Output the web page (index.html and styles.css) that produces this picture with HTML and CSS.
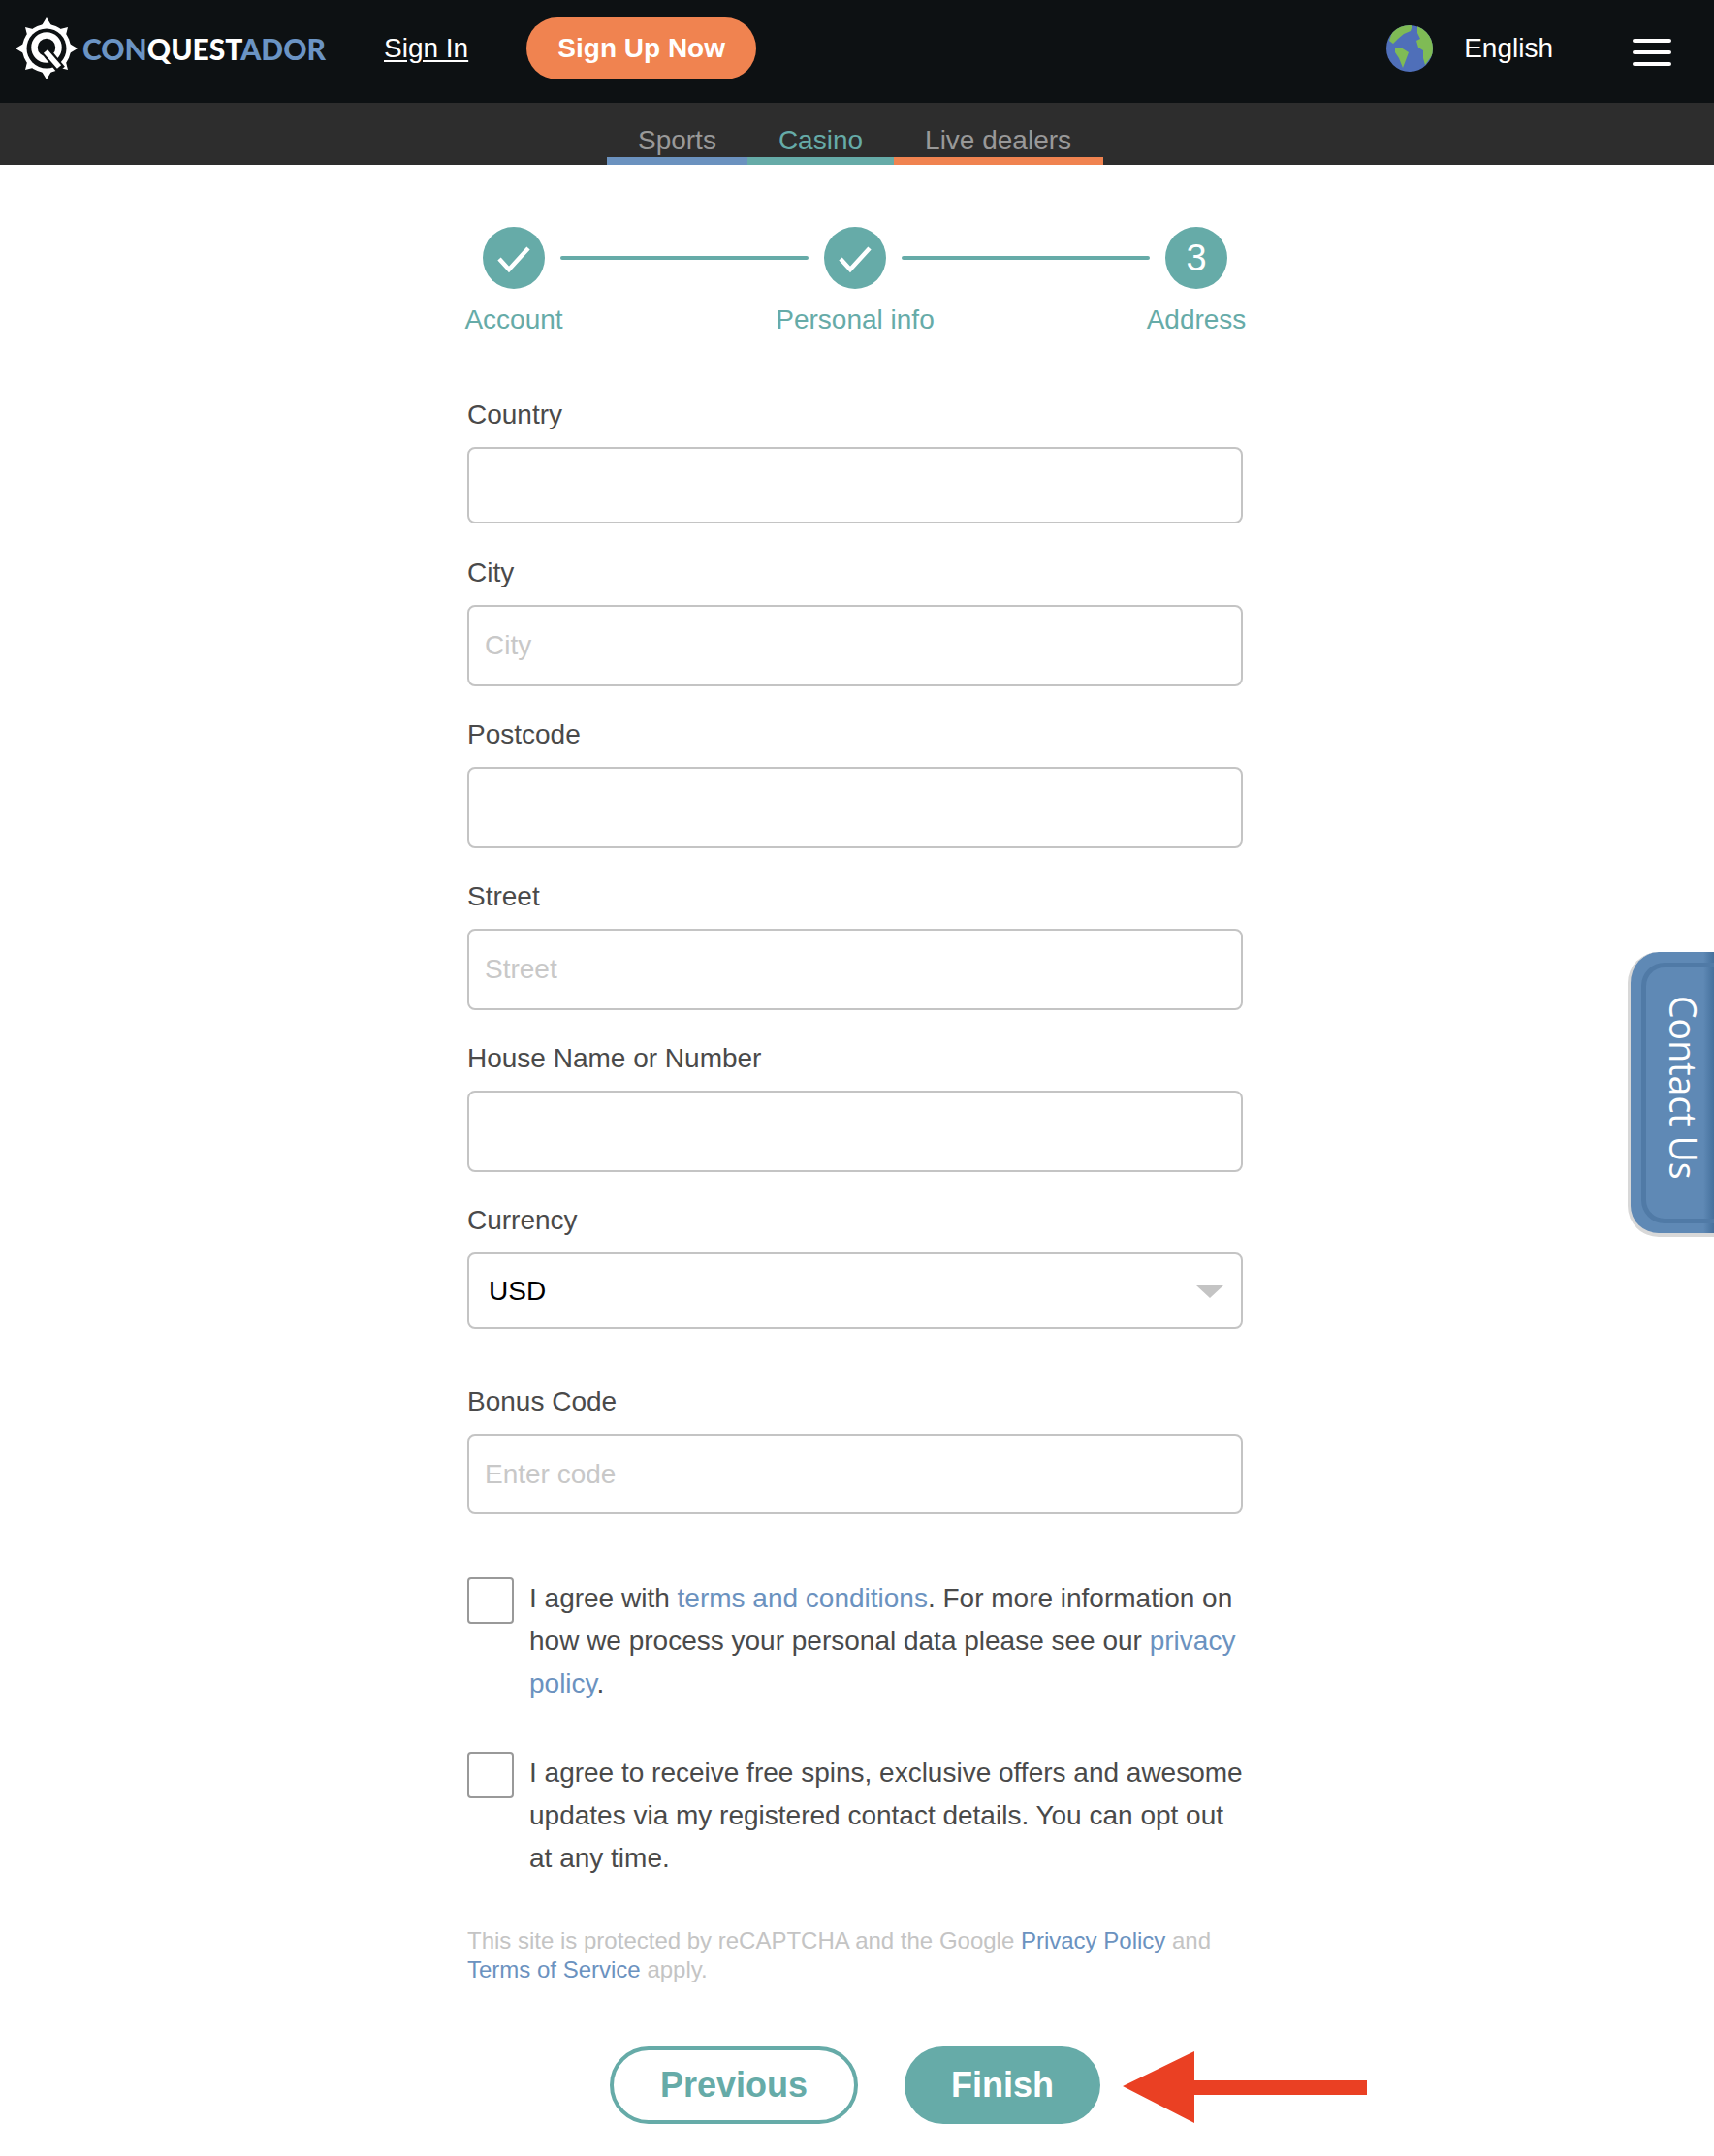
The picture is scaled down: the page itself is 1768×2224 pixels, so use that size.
FILE: index.html
```html
<!DOCTYPE html>
<html lang="en">
<head>
<meta charset="utf-8">
<title>Conquestador - Sign up</title>
<link rel="stylesheet" href="styles.css">
</head>
<body>
<header class="topbar">
  <a class="logo" href="#">
    <svg class="logo-mark" viewBox="0 0 64 64" width="64" height="64">
      <circle cx="32" cy="32" r="25" fill="#fff"/>
      <path fill="#fff" d="M32 0l6 10H26zM32 64l-6-10h12zM0 32l10-6v12zM64 32l-10 6V26zM10 10l12 3-9 9zM54 10l-3 12-9-9zM10 54l3-12 9 9zM54 54l-12-3 9-9z"/>
      <circle cx="32" cy="32" r="20.500" fill="#0d1113"/>
      <circle cx="32" cy="31" r="12.500" fill="none" stroke="#fff" stroke-width="6.500"/>
      <path d="M33 37l14 17" stroke="#0d1113" stroke-width="10" fill="none"/>
      <path d="M31 35l14 16" stroke="#fff" stroke-width="5.500" fill="none"/>
    </svg>
    <span class="logo-text"><span class="logo-blue">CON</span>QUEST<span class="logo-blue">ADOR</span></span>
  </a>
  <a class="signin" href="#">Sign In</a>
  <a class="signup" href="#">Sign Up Now</a>
  <div class="spacer"></div>
  <svg class="globe" viewBox="0 0 48 48" width="48" height="48">
    <defs><clipPath id="globe-clip"><circle cx="24" cy="24" r="24"/></clipPath></defs>
    <circle cx="24" cy="24" r="24" fill="#4f6fb9"/>
    <g clip-path="url(#globe-clip)" fill="#7fbb55">
      <path d="M12 0h15l-2 6-7 3-6 5-5 5-4-3 3-9z"/>
      <path d="M9 24l6-1 8 5-3 8-3 8-4-10-4-6z"/>
      <path d="M32 0h16v30l-8 11-2-7v-8l-5-3-2-7 4-2-3-6z"/>
    </g>
  </svg>
  <span class="lang">English</span>
  <button class="burger" type="button" aria-label="Menu"><span></span><span></span><span></span></button>
</header>

<nav class="subnav">
  <a class="tab tab-sports" href="#">Sports</a>
  <a class="tab tab-casino" href="#">Casino</a>
  <a class="tab tab-live" href="#">Live dealers</a>
</nav>

<main class="content">
  <form class="form">
    <div class="stepper">
      <div class="steps">
        <span class="circle"><svg viewBox="0 0 64 64" width="64" height="64"><path d="M17 33l10 11 20-22" fill="none" stroke="#fff" stroke-width="4.500"/></svg></span>
        <span class="step-line"></span>
        <span class="circle"><svg viewBox="0 0 64 64" width="64" height="64"><path d="M17 33l10 11 20-22" fill="none" stroke="#fff" stroke-width="4.500"/></svg></span>
        <span class="step-line"></span>
        <span class="circle">3</span>
      </div>
      <div class="step-labels">
        <span class="step-label">Account</span>
        <span class="step-label">Personal info</span>
        <span class="step-label">Address</span>
      </div>
    </div>

    <div class="field field-first">
      <label class="label">Country</label>
      <input class="input input-short" type="text">
    </div>
    <div class="field">
      <label class="label">City</label>
      <input class="input" type="text" placeholder="City">
    </div>
    <div class="field">
      <label class="label">Postcode</label>
      <input class="input" type="text">
    </div>
    <div class="field">
      <label class="label">Street</label>
      <input class="input" type="text" placeholder="Street">
    </div>
    <div class="field">
      <label class="label">House Name or Number</label>
      <input class="input" type="text">
    </div>
    <div class="field field-select">
      <label class="label">Currency</label>
      <div class="select-wrap">
        <select class="select"><option>USD</option></select>
      </div>
    </div>
    <div class="field">
      <label class="label">Bonus Code</label>
      <input class="input input-bonus" type="text" placeholder="Enter code">
    </div>

    <div class="check-row check-first">
      <span class="check"></span>
      <p class="check-text">I agree with <a href="#">terms and conditions</a>. For more information on how we process your personal data please see our <a href="#">privacy policy</a>.</p>
    </div>
    <div class="check-row">
      <span class="check"></span>
      <p class="check-text">I agree to receive free spins, exclusive offers and awesome updates via my registered contact details. You can opt out at any time.</p>
    </div>

    <p class="recaptcha">This site is protected by reCAPTCHA and the Google <a href="#">Privacy Policy</a> and <a href="#">Terms of Service</a> apply.</p>

    <div class="actions">
      <button class="btn btn-outline" type="button">Previous</button>
      <button class="btn btn-solid" type="button">Finish</button>
      <svg class="arrow" viewBox="0 0 252 74" width="252" height="74"><path fill="#ea4023" d="M0 36L74 0v30h178v15H74v29z"/></svg>
    </div>
  </form>
</main>

<a class="contact" href="#"><span class="contact-inner"><span class="contact-text">Contact Us</span></span></a>
</body>
</html>
```

FILE: styles.css
```css
* { box-sizing: border-box; }

html, body {
  margin: 0;
  padding: 0;
}

body {
  position: relative;
  height: 2224px;
  overflow: hidden;
  background: #fff;
  color: #4a4a4a;
  font-family: "Liberation Sans", Arial, sans-serif;
  font-size: 28px;
}

a { color: #6b92bf; text-decoration: none; }

/* top bar */
.topbar {
  display: flex;
  align-items: center;
  height: 106px;
  padding-bottom: 6px;
  padding-left: 16px;
  background: #0d1113;
}

.logo {
  display: flex;
  align-items: center;
  width: 380px;
  gap: 5px;
}

.logo-mark { flex: none; }

.logo-text {
  font-family: Lato, sans-serif;
  font-weight: 900;
  font-size: 30px;
  color: #fff;
}

.logo-blue { color: #6b94c4; }

.signin {
  color: #fff;
  text-decoration: underline;
  text-underline-offset: 3px;
}

.signup {
  display: flex;
  align-items: center;
  justify-content: center;
  width: 237px;
  height: 64px;
  margin-left: 60px;
  border-radius: 32px;
  background: #f08350;
  color: #fff;
  font-weight: 700;
}

.spacer { flex: 1; }

.globe { flex: none; }

.lang {
  margin-left: 32px;
  color: #fff;
}

.burger {
  display: flex;
  flex-direction: column;
  gap: 8px;
  width: 40px;
  margin: 8px 44px 0 82px;
  padding: 0;
  border: 0;
  background: none;
}

.burger span {
  display: block;
  height: 4px;
  border-radius: 2px;
  background: #fff;
}

/* sub navigation */
.subnav {
  display: flex;
  justify-content: center;
  height: 64px;
  padding-right: 4px;
  background: #2d2d2d;
}

.tab {
  padding: 22px 32px 0;
  border-bottom: 8px solid;
  line-height: 33px;
  color: #999;
}

.tab-sports { border-color: #6b92bf; }
.tab-casino { border-color: #66aba8; color: #66aba8; }
.tab-live { border-color: #f08350; padding-right: 33px; padding-left: 32px; }

/* form */
.content {
  display: flex;
  justify-content: center;
  padding-right: 4px;
}

.form { width: 800px; }

.stepper {
  width: 768px;
  margin-left: 16px;
  padding-top: 64px;
}

.steps {
  display: flex;
  align-items: center;
}

.circle {
  display: flex;
  flex: none;
  align-items: center;
  justify-content: center;
  width: 64px;
  height: 64px;
  border-radius: 50%;
  background: #66aba8;
  color: #fff;
  font-size: 38px;
}

.step-line {
  flex: 1;
  height: 4px;
  margin: 0 16px;
  border-radius: 2px;
  background: #66aba8;
}

.step-labels {
  display: flex;
  justify-content: space-between;
  margin-top: 16px;
}

.step-label {
  display: flex;
  justify-content: center;
  width: 64px;
  line-height: 32px;
  white-space: nowrap;
  color: #66aba8;
}

.field { margin-top: 33px; }
.field-first { margin-top: 65px; }
.field-first + .field { margin-top: 34px; }

.label {
  display: block;
  margin-bottom: 17px;
  padding-top: 1px;
  line-height: 32px;
  color: #4a4a4a;
}

.input,
.select {
  display: block;
  width: 100%;
  height: 84px;
  border: 2px solid #c4c4c4;
  border-radius: 8px;
  background: #fff;
  font-family: inherit;
  font-size: 28px;
  color: #000;
}

.input { padding: 0 16px; }
.input::placeholder { color: #c8c8c8; opacity: 1; }
.input-short { height: 79px; }
.input-bonus { height: 83px; }

.select-wrap { position: relative; }

.select {
  height: 79px;
  padding: 0 20px;
  appearance: none;
}

.select-wrap::after {
  content: "";
  position: absolute;
  top: 34px;
  right: 20px;
  border-style: solid;
  border-width: 13px 14px 0;
  border-color: #c4c4c4 transparent transparent;
}

.field-select + .field { margin-top: 58px; }

.check-row {
  display: flex;
  gap: 16px;
  margin-top: 47px;
}

.check-first { margin-top: 64px; }

.check {
  flex: none;
  width: 48px;
  height: 48px;
  margin-top: 1px;
  border: 2px solid #999;
  border-radius: 4px;
}

.check-text {
  margin: 0 -6px 0 0;
  padding-top: 1px;
  line-height: 44px;
  color: #4a4a4a;
}

.recaptcha {
  margin: 48px 0 0;
  font-size: 24px;
  line-height: 30px;
  color: #c4c4c4;
}

.actions {
  position: relative;
  display: flex;
  gap: 48px;
  margin-top: 64px;
  margin-left: 147px;
}

.btn {
  height: 80px;
  padding: 0;
  border-radius: 40px;
  font-family: inherit;
  font-size: 36px;
  font-weight: 700;
}

.btn-outline {
  width: 256px;
  border: 4px solid #66aba8;
  background: #fff;
  color: #66aba8;
}

.btn-solid {
  width: 202px;
  border: 0;
  background: #66aba8;
  color: #fff;
}

.arrow {
  position: absolute;
  top: 5px;
  left: 529px;
}

/* contact tab */
.contact {
  position: absolute;
  top: 982px;
  right: 0;
  width: 89px;
  height: 294px;
  padding: 11px 0 10px 11px;
  border: solid #d8d8d8;
  border-width: 0 0 4px 3px;
  border-radius: 32px 0 0 32px;
  background: linear-gradient(90deg, #5f89b5 75px, #45709c);
}

.contact-inner {
  display: flex;
  align-items: center;
  height: 100%;
  padding: 0 0 12px 20px;
  border: solid #507aa6;
  border-width: 5px 0 5px 5px;
  border-radius: 24px 0 0 24px;
  background: linear-gradient(90deg, #5f89b5 59px, #45709c);
}

.contact-text {
  writing-mode: vertical-rl;
  font-family: "Open Sans", sans-serif;
  font-size: 37.500px;
  line-height: 36px;
  white-space: nowrap;
  color: #fff;
}
```
